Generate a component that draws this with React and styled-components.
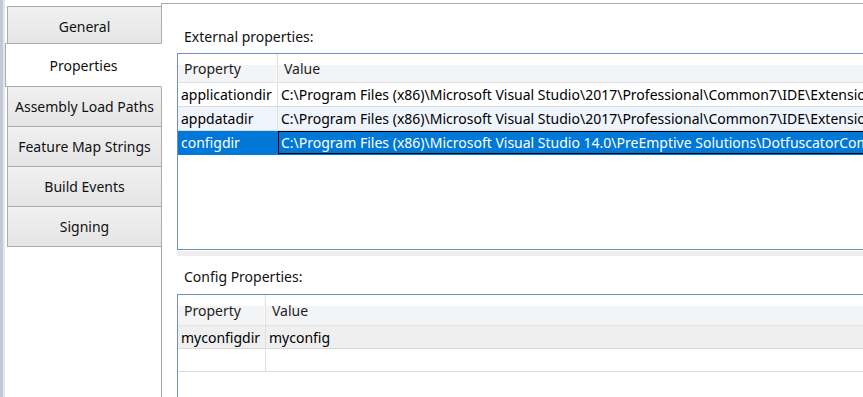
import React from "react";
import styled, { createGlobalStyle } from "styled-components";

const GlobalStyle = createGlobalStyle`
  html, body {
    margin: 0;
    padding: 0;
    background: #fff;
  }
  body {
    font-family: "Noto Sans", "Open Sans", sans-serif;
    font-size: 14px;
    color: #000;
  }
`;

const Window = styled.div`
  display: flex;
  width: 863px;
  height: 397px;
  overflow: hidden;
  background: #fff;
`;

const Edge = styled.div`
  flex: none;
  width: 5px;
  background: linear-gradient(to right, #c3cad3 0 3px, #e3e8ee 3px 5px);
`;

const TabStrip = styled.div`
  flex: none;
  width: 157px;
  margin-top: 3px;
  display: flex;
  flex-direction: column;
`;

const StripCap = styled.div`
  flex: none;
  height: 3px;
  border-right: 1px solid #acacac;
`;

const StripFill = styled.div`
  flex: 1;
  border-right: 1px solid #a0a0a0;
`;

const Tab = styled.div`
  position: relative;
  z-index: ${(p) => (p.$active ? 1 : 0)};
  flex: none;
  box-sizing: border-box;
  height: ${(p) => (p.$active ? 44 : 41)}px;
  margin-top: ${(p) => (p.$active ? -4 : p.$first ? 0 : -1)}px;
  margin-left: ${(p) => (p.$active ? 0 : 2)}px;
  display: flex;
  align-items: center;
  justify-content: center;
  border: 1px solid #acacac;
  border-right-color: ${(p) => (p.$active ? "#fff" : "#acacac")};
  background: ${(p) =>
    p.$active ? "#fff" : "linear-gradient(#f0f0f0, #e5e5e5)"};
  color: #111;
  white-space: nowrap;
`;

const Pane = styled.div`
  flex: 1;
  min-width: 0;
  margin-top: 3px;
  padding: 23px 0 0 15px;
  border-top: 1px solid #acacac;
  display: flex;
  flex-direction: column;
  overflow: hidden;
`;

const Label = styled.div`
  flex: none;
  height: 20px;
  line-height: 20px;
  padding-left: 7px;
  margin-top: ${(p) => p.$top || 0}px;
  margin-bottom: ${(p) => p.$bottom}px;
  color: #111;
`;

const Grid = styled.div`
  flex: ${(p) => (p.$fill ? 1 : "none")};
  height: ${(p) => (p.$fill ? "auto" : `${p.$height}px`)};
  width: calc(100% + 40px);
  box-sizing: border-box;
  border: 1px solid #7190c0;
  border-bottom-width: ${(p) => (p.$fill ? 0 : 1)}px;
  background: #fff;
  display: flex;
  flex-direction: column;
`;

const HeaderRow = styled.div`
  flex: none;
  display: grid;
  grid-template-columns: ${(p) => p.$key}px 1fr;
  height: ${(p) => p.$h}px;
  box-sizing: border-box;
  border-bottom: 1px solid #e3e3e3;
  background: linear-gradient(#fff 0 11px, #f3f4f6 11px 100%);
  color: #1e1e1e;
`;

const HeaderCell = styled.div`
  display: flex;
  align-items: center;
  padding-left: 6px;
  border-right: 1px solid #e2e2e2;
  box-shadow: inset -1px 0 0 #fafafa;
  &:last-child {
    border-right: none;
    box-shadow: none;
  }
`;

const Row = styled.div`
  flex: none;
  display: grid;
  grid-template-columns: ${(p) => p.$key}px 1fr;
  height: ${(p) => p.$h}px;
  box-sizing: border-box;
  border-bottom: 1px solid ${(p) => (p.$selected ? "#0078d7" : "#dadada")};
  background: ${(p) =>
    p.$selected ? "#0078d7" : p.$tint === "blue" ? "#eef5fc" : p.$tint === "gray" ? "#efefef" : "#fff"};
  color: ${(p) => (p.$selected ? "#fff" : "#000")};
`;

const Cell = styled.div`
  display: flex;
  align-items: center;
  padding-left: 3px;
  white-space: nowrap;
  overflow: hidden;
  border-right: 1px solid ${(p) => (p.$selected ? "#0078d7" : "#e0e0e0")};
  &:last-child {
    border-right: none;
  }
  outline: ${(p) => (p.$focus ? "1px solid #000" : "none")};
  outline-offset: -1px;
`;

const Splitter = styled.div`
  flex: none;
  height: 5px;
  margin-top: 1px;
  width: calc(100% + 40px);
  background: #efefef;
`;

const tabs = [
  "General",
  "Properties",
  "Assembly Load Paths",
  "Feature Map Strings",
  "Build Events",
  "Signing",
];

const external = [
  {
    key: "applicationdir",
    value:
      "C:\\Program Files (x86)\\Microsoft Visual Studio\\2017\\Professional\\Common7\\IDE\\Extensions\\PreEmptive",
  },
  {
    key: "appdatadir",
    value:
      "C:\\Program Files (x86)\\Microsoft Visual Studio\\2017\\Professional\\Common7\\IDE\\Extensions\\PreEmptive",
    tint: "blue",
  },
  {
    key: "configdir",
    value:
      "C:\\Program Files (x86)\\Microsoft Visual Studio 14.0\\PreEmptive Solutions\\DotfuscatorCommunity\\config",
    selected: true,
  },
];

function PropertyGrid({ rows, keyWidth, headerHeight, rowHeight, height, fill, blankRows }) {
  return (
    <Grid $height={height} $fill={fill}>
      <HeaderRow $key={keyWidth} $h={headerHeight}>
        <HeaderCell>Property</HeaderCell>
        <HeaderCell>Value</HeaderCell>
      </HeaderRow>
      {rows.map((r) => (
        <Row key={r.key} $key={keyWidth} $h={rowHeight} $selected={r.selected} $tint={r.tint}>
          <Cell $selected={r.selected}>{r.key}</Cell>
          <Cell $selected={r.selected} $focus={r.selected}>
            {r.value}
          </Cell>
        </Row>
      ))}
      {Array.from({ length: blankRows || 0 }).map((_, i) => (
        <Row key={`blank-${i}`} $key={keyWidth} $h={rowHeight}>
          <Cell />
          <Cell />
        </Row>
      ))}
    </Grid>
  );
}

export default function App() {
  return (
    <>
      <GlobalStyle />
      <Window>
        <Edge />
        <TabStrip>
          <StripCap />
          {tabs.map((t, i) => (
            <Tab key={t} $first={i === 0} $active={t === "Properties"}>
              {t}
            </Tab>
          ))}
          <StripFill />
        </TabStrip>
        <Pane>
          <Label $bottom={6}>External properties:</Label>
          <PropertyGrid
            rows={external}
            keyWidth={100}
            headerHeight={29}
            rowHeight={24}
            height={197}
          />
          <Splitter />
          <Label $top={11} $bottom={7}>
            Config Properties:
          </Label>
          <PropertyGrid
            rows={[{ key: "myconfigdir", value: "myconfig", tint: "gray" }]}
            keyWidth={88}
            headerHeight={31}
            rowHeight={23}
            fill
            blankRows={1}
          />
        </Pane>
      </Window>
    </>
  );
}
